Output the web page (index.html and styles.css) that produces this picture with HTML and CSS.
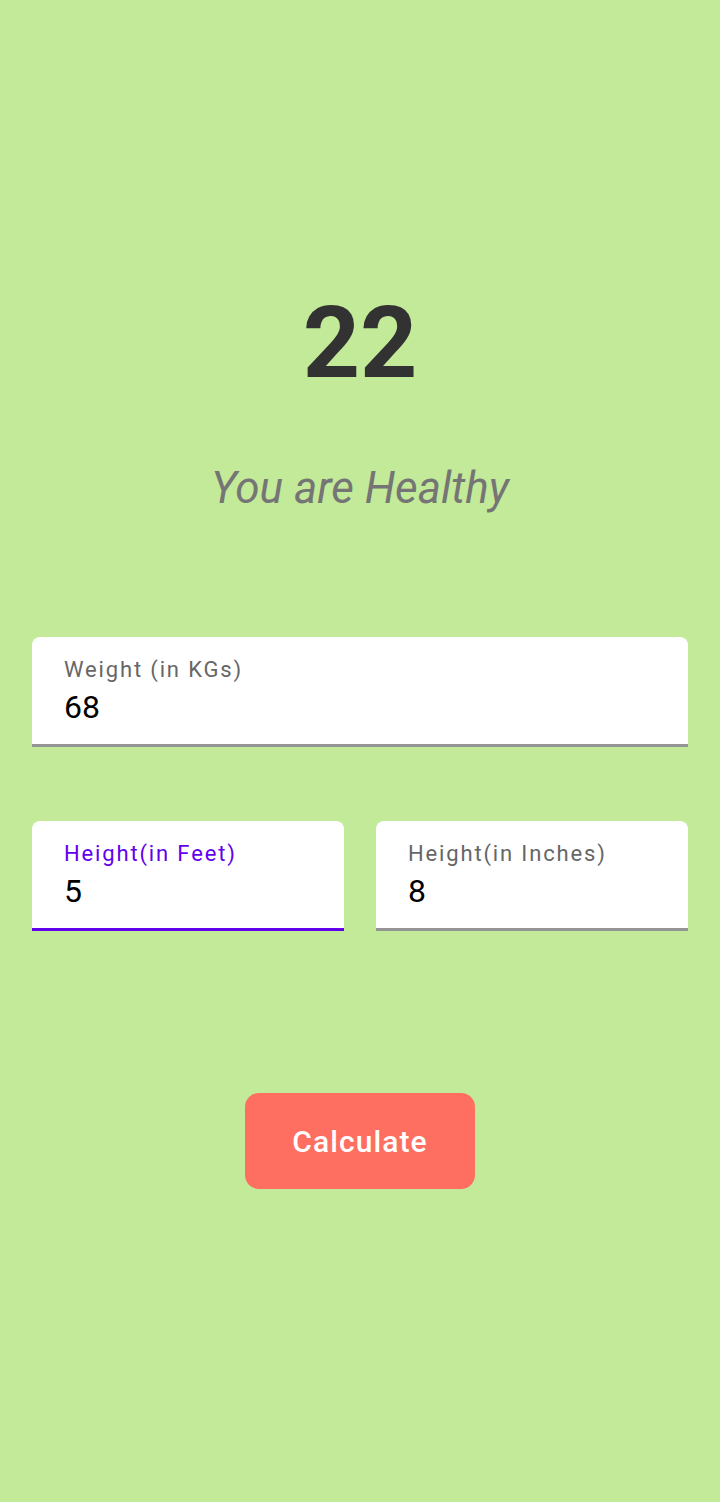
FILE: index.html
```html
<!DOCTYPE html>
<html lang="en">
<head>
<meta charset="utf-8">
<title>BMI Calculator</title>
<link rel="stylesheet" href="styles.css">
</head>
<body>
<main class="screen">
  <div class="bmi-value">22</div>
  <div class="bmi-status">You are Healthy</div>
  <div class="field field-full">
    <span class="field-label">Weight (in KGs)</span>
    <span class="field-value">68</span>
  </div>
  <div class="field-row">
    <div class="field field-focused">
      <span class="field-label">Height(in Feet)</span>
      <span class="field-value">5</span>
    </div>
    <div class="field">
      <span class="field-label">Height(in Inches)</span>
      <span class="field-value">8</span>
    </div>
  </div>
  <div class="actions">
    <button class="calc-btn" type="button">Calculate</button>
  </div>
</main>
</body>
</html>
```

FILE: styles.css
```css
html, body {
  margin: 0;
  padding: 0;
}
body {
  background: #c3ea98;
  font-family: Roboto, "Noto Sans", sans-serif;
  width: 720px;
  height: 1502px;
  overflow: hidden;
}
.screen {
  display: flex;
  flex-direction: column;
  padding: 293px 32px 0;
}
.bmi-value {
  font-size: 100px;
  line-height: 100px;
  font-weight: 700;
  color: #323232;
  text-align: center;
}
.bmi-status {
  margin-top: 73px;
  font-size: 44px;
  line-height: 44px;
  font-style: italic;
  color: #757575;
  text-align: center;
}
.field {
  box-sizing: border-box;
  height: 110px;
  background: #ffffff;
  border-radius: 8px 8px 0 0;
  border-bottom: 3px solid #949494;
  padding: 22px 32px 0;
  display: flex;
  flex-direction: column;
  gap: 10px;
}
.field-full {
  margin-top: 127px;
}
.field-label {
  font-size: 22px;
  line-height: 22px;
  color: #666666;
  letter-spacing: 1.85px;
}
.field-value {
  font-size: 32px;
  line-height: 32px;
  color: #000000;
}
.field-focused {
  border-bottom-color: #6200ee;
}
.field-focused .field-label {
  color: #6200ee;
}
.field-row {
  margin-top: 74px;
  display: grid;
  grid-template-columns: 1fr 1fr;
  gap: 32px;
}
.actions {
  margin-top: 162px;
  display: flex;
  justify-content: center;
}
.calc-btn {
  width: 230px;
  height: 96px;
  border: none;
  border-radius: 14px;
  background: #ff6f61;
  color: #ffffff;
  font-family: Roboto, "Noto Sans", sans-serif;
  font-size: 30px;
  font-weight: 500;
  letter-spacing: 1.1px;
  padding: 0;
}
```
